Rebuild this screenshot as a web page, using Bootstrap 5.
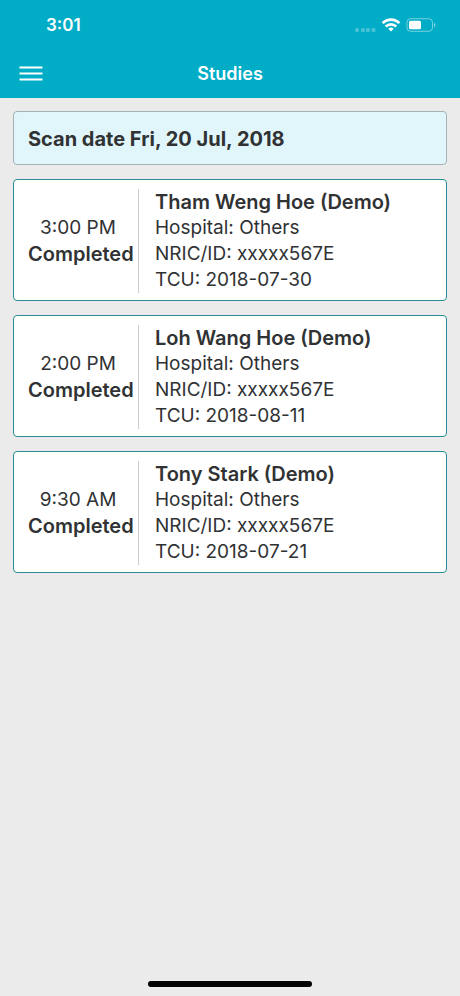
<!DOCTYPE html>
<html lang="en">
<head>
<meta charset="utf-8">
<meta name="viewport" content="width=device-width, initial-scale=1">
<title>Studies</title>
<link href="https://cdn.jsdelivr.net/npm/bootstrap@5.3.0/dist/css/bootstrap.min.css" rel="stylesheet">
<style>
  body { background: #ebebeb; color: #303234; font-family: Inter, "Liberation Sans", sans-serif; font-size: 19px; line-height: 26px; }
  .app-header { background: #00acc6; color: #fff; }
  .status-bar { height: 50px; padding: 0 24px 0 46px; font-size: 17px; }
  .app-bar { height: 48px; padding: 0 15px; }
  .bar-side { flex: 1 1 0; }
  .app-title { font-size: 18px; line-height: 24px; }
  .menu-btn { line-height: 0; }
  .study-list { padding: 13px; gap: 14px; }
  .panel { border: 1px solid #2a8c96; border-radius: 4px; background: #fff; }
  .date-panel { border-color: #a3b3b5; background: #e0f6fa; padding: 14px 14px 12px; font-size: 20px; line-height: 26px; }
  .study { padding: 9px 14px 7px; }
  .study strong { display: block; font-size: 20px; font-weight: 600; }
  .study-when { border-right: 1px solid #ccc; width: 111px; }
  .study-time { padding-right: 10px; }
  .study-info { padding-left: 16px; }
  .home-bar { width: 164px; height: 6px; background: #000; margin-bottom: 9px; }
</style>
<script src="https://cdn.jsdelivr.net/npm/bootstrap@5.3.0/dist/js/bootstrap.bundle.min.js" defer></script>
</head>
<body class="d-flex flex-column min-vh-100">
<header class="app-header">
  <div class="status-bar d-flex align-items-center justify-content-between">
    <span class="fw-semibold">3:01</span>
    <svg width="82" height="18" viewBox="0 0 82 18" role="img" aria-label="No signal, Wi-Fi on, battery half full">
      <g fill="#fff" fill-opacity=".28"><rect x="1" y="12" width="4" height="4" rx="1.500"/><rect x="7" y="12" width="4" height="4" rx="1.500"/><rect x="12" y="12" width="4" height="4" rx="1.500"/><rect x="17.500" y="12" width="4" height="4" rx="1.500"/></g>
      <g fill="none" stroke="#fff" stroke-width="2.6"><path d="M28.6 7.1a12 12 0 0 1 16.8 0"/><path d="M31.7 10.5a7.6 7.6 0 0 1 10.6 0"/></g>
      <path d="M34.3 12.7a4 4 0 0 1 5.4 0L37 15.5z" fill="#fff"/>
      <rect x="53" y="2.7" width="25.500" height="12.600" rx="3.600" fill="none" stroke="#fff" stroke-opacity=".45"/>
      <rect x="55" y="4.700" width="12" height="8.600" rx="1.600" fill="#fff"/>
      <path d="M80 7v4.200q1.500-.5 1.500-2.100T80 7z" fill="#fff" fill-opacity=".5"/>
    </svg>
  </div>
  <nav class="app-bar d-flex align-items-center" aria-label="Main">
    <div class="bar-side d-flex">
      <button type="button" class="menu-btn btn p-1 border-0 text-white" aria-label="Open menu">
        <svg width="24" height="16" viewBox="0 0 24 16" stroke="currentColor" stroke-width="2"><path d="M.5 1.500h23M.5 7.500h23M.5 13.500h23"/></svg>
      </button>
    </div>
    <h1 class="app-title fw-semibold mb-0">Studies</h1>
    <div class="bar-side"></div>
  </nav>
</header>
<main class="study-list d-flex flex-column flex-grow-1">
  <h2 class="panel date-panel fw-bold mb-0">Scan date Fri, 20 Jul, 2018</h2>
  <article class="panel study d-flex">
    <div class="study-when d-flex flex-column justify-content-center flex-shrink-0"><div class="study-time text-center">3:00 PM</div><strong>Completed</strong></div>
    <div class="study-info"><strong>Tham Weng Hoe (Demo)</strong><div>Hospital: Others</div><div>NRIC/ID: xxxxx567E</div><div>TCU: 2018-07-30</div></div>
  </article>
  <article class="panel study d-flex">
    <div class="study-when d-flex flex-column justify-content-center flex-shrink-0"><div class="study-time text-center">2:00 PM</div><strong>Completed</strong></div>
    <div class="study-info"><strong>Loh Wang Hoe (Demo)</strong><div>Hospital: Others</div><div>NRIC/ID: xxxxx567E</div><div>TCU: 2018-08-11</div></div>
  </article>
  <article class="panel study d-flex">
    <div class="study-when d-flex flex-column justify-content-center flex-shrink-0"><div class="study-time text-center">9:30 AM</div><strong>Completed</strong></div>
    <div class="study-info"><strong>Tony Stark (Demo)</strong><div>Hospital: Others</div><div>NRIC/ID: xxxxx567E</div><div>TCU: 2018-07-21</div></div>
  </article>
</main>
<footer class="d-flex justify-content-center"><div class="home-bar rounded-pill"></div></footer>
</body>
</html>
